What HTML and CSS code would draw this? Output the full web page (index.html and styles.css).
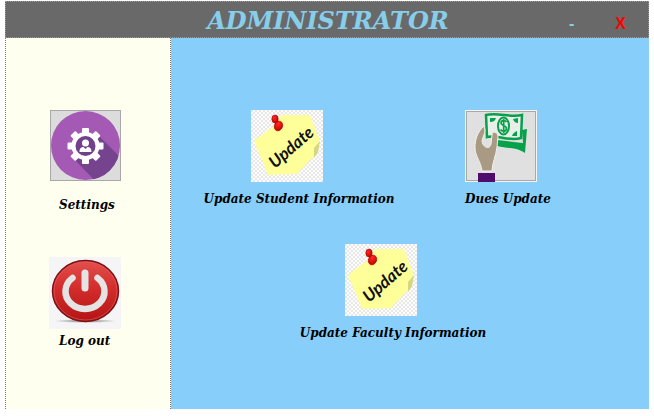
FILE: index.html
```html
<!DOCTYPE html>
<html lang="en">
<head>
<meta charset="utf-8">
<title>Administrator</title>
<link rel="stylesheet" href="styles.css">
</head>
<body>
<svg class="defs" aria-hidden="true">
  <defs>
    <pattern id="checks" width="4" height="4" patternUnits="userSpaceOnUse">
      <rect width="4" height="4" fill="#fcfcfc"/>
      <rect width="2" height="2" fill="#e8e8e8"/>
      <rect x="2" y="2" width="2" height="2" fill="#e8e8e8"/>
    </pattern>
    <radialGradient id="pin" cx="35%" cy="30%" r="75%">
      <stop offset="0" stop-color="#ff2a20"/>
      <stop offset="1" stop-color="#c40000"/>
    </radialGradient>
    <symbol id="note" viewBox="0 0 72 72">
      <rect width="72" height="72" fill="url(#checks)"/>
      <path d="M30 5 L59 5 L69 31 L63 46 L46 64 L17 65 L3 31 L24 15Z" fill="#ffff99"/>
      <path d="M69 31 L63 38 L63 48 L67 42Z" fill="#d6d680"/>
      <path d="M24 9 L27 15" stroke="#b00" stroke-width="4"/>
      <ellipse cx="24" cy="9" rx="3.200" ry="4" fill="url(#pin)" stroke="#a00" stroke-width=".6"/>
      <ellipse cx="27.500" cy="16" rx="4" ry="5" fill="url(#pin)" stroke="#a00" stroke-width=".6" transform="rotate(25 27.500 16)"/>
      <text class="note-text" x="24" y="59" transform="rotate(-41 24 59)">Update</text>
    </symbol>
  </defs>
</svg>
<div class="window">
  <header class="titlebar">
    <h1>ADMINISTRATOR</h1>
    <div class="controls">
      <button class="minimize" type="button" aria-label="Minimize">-</button>
      <button class="close" type="button" aria-label="Close">X</button>
    </div>
  </header>
  <div class="body">
    <nav class="sidebar">
      <button class="side-item settings" type="button">
        <svg class="icon" viewBox="0 0 72 72">
          <defs><clipPath id="disc"><circle cx="36.500" cy="36" r="34.500"/></clipPath></defs>
          <rect x="1.500" y=".5" width="70" height="70" fill="#dcdcdc" stroke="#a8a8a8"/>
          <circle cx="36.500" cy="35.500" r="34.500" fill="#a45ab4"/>
          <path d="M48 24 L75 51 L75 75 L50 75 L24 48Z" fill="#76438f" clip-path="url(#disc)"/>
          <g fill="#fff" transform="translate(36.500 36)">
            <circle r="14"/>
            <g id="cog">
              <rect x="-3.500" y="-18" width="7" height="36" rx="1"/>
              <rect x="-18" y="-3.500" width="36" height="7" rx="1"/>
            </g>
            <use href="#cog" transform="rotate(45)"/>
            <circle r="10" fill="#70408a"/>
            <circle cy="-3" r="3.500"/>
            <path d="M-6 6 C-6 1 -3 1 -2 1 L0 3 L2 1 C4 1 6 2 6 6Z"/>
          </g>
        </svg>
        <span>Settings</span>
      </button>
      <button class="side-item logout" type="button">
        <svg class="icon" viewBox="0 0 72 72">
          <defs>
            <linearGradient id="red" x2="0" y2="1">
              <stop offset="0" stop-color="#e2504d"/>
              <stop offset=".45" stop-color="#d32d2c"/>
              <stop offset="1" stop-color="#b41416"/>
            </linearGradient>
            <radialGradient id="shade"><stop offset="0" stop-color="#777"/><stop offset="1" stop-color="#f5f5f7"/></radialGradient>
          </defs>
          <rect width="72" height="72" fill="#f5f5f7"/>
          <ellipse cx="36" cy="64" rx="31" ry="2" fill="url(#shade)"/>
          <ellipse cx="36.500" cy="34" rx="33" ry="30.500" fill="url(#red)" stroke="#7d1012" stroke-width="1.500"/>
          <ellipse cx="36.500" cy="34" rx="31.500" ry="29" fill="none" stroke="#e2605c" stroke-width=".6"/>
          <path d="M23.500 21 A19.500 17.500 0 1 0 48.500 21" fill="none" stroke="#e4e4e4" stroke-width="6.500" stroke-linecap="round"/>
          <path d="M36 16 V31" stroke="#e4e4e4" stroke-width="7" stroke-linecap="round"/>
        </svg>
        <span>Log out</span>
      </button>
    </nav>
    <main class="tiles">
      <div class="row">
        <button class="tile" type="button">
          <svg class="icon"><use href="#note"/></svg>
          <span>Update Student Information</span>
        </button>
        <button class="tile dues" type="button">
          <svg class="icon" viewBox="0 0 72 72">
            <rect width="72" height="72" fill="#f4f4f4"/>
            <rect x="1.500" y="1.500" width="69" height="69" fill="#e0e0e0" stroke="#a8a8a8"/>
            <path d="M57 20 L62 19 L60 43 C49 36 42 39 32 36 L32 30 C42 31 50 32 58 33Z" fill="#07a04b"/>
            <path d="M21 5 C32 2 46 8 57 5 L56 28 C44 32 32 24 22 27Z" fill="#e9eee9" stroke="#07a04b" stroke-width="2.500"/>
            <path d="M25 8 L31 8 C30 11 28 12 25 12Z M53 8 L48 9 C49 12 51 13 53 13Z M52 26 L47 26 C48 23 50 22 52 21Z" fill="#07a04b"/>
            <ellipse cx="38.500" cy="16" rx="5.500" ry="8.500" fill="#e9eee9" stroke="#07a04b" stroke-width="2"/>
            <path d="M41.500 12 C40 10 36 10 36 13 C36 16 41.500 15 41.500 18.500 C41.500 22 37 21.500 35.500 19.500 M38.700 9 V23" fill="none" stroke="#07a04b" stroke-width="1.700"/>
            <path d="M19 16 C12 22 10 31 10 37 C10 47 16 51 17 61 L27 61 C27 53 31 46 32 37 L33 26 C32 21 27 21 27 25 L26 34 C25 40 18 38 17 31 C18 26 20 24 20 20Z" fill="#a99b83" stroke="#f2f0eb" stroke-width="1"/>
            <rect x="13" y="63" width="17" height="9" fill="#500c6d"/>
          </svg>
          <span>Dues Update</span>
        </button>
      </div>
      <div class="row second">
        <button class="tile" type="button">
          <svg class="icon"><use href="#note"/></svg>
          <span>Update Faculty Information</span>
        </button>
      </div>
    </main>
  </div>
</div>
</body>
</html>
```
FILE: styles.css
```css
* {
  box-sizing: border-box;
}

body {
  margin: 0;
  background: #fff;
  font-family: "DejaVu Serif", serif;
}

button {
  padding: 0;
  border: 0;
  background: none;
  font: inherit;
  color: inherit;
}

.defs {
  position: absolute;
  width: 0;
  height: 0;
}

.window {
  display: flex;
  flex-direction: column;
  min-height: 100vh;
  padding: 1px 5px 7px;
}

.titlebar {
  display: grid;
  grid-template-columns: 1fr auto 1fr;
  align-items: center;
  height: 37px;
  border: 1px dotted #999;
  background: #696969;
  color: #87ceeb;
}

.titlebar h1 {
  grid-column: 2;
  margin: 0;
  padding: 2px 0 0 2px;
  font-size: 24px;
  font-style: italic;
  line-height: 32px;
}

.controls {
  display: flex;
  justify-content: flex-end;
  gap: 41px;
  padding: 8px 22px 0 0;
  font-family: "Liberation Sans", sans-serif;
  font-size: 16px;
  font-weight: bold;
  line-height: 20px;
}

.close {
  color: #f00;
}

.body {
  display: grid;
  grid-template-columns: 166px 1fr;
  flex: 1;
}

.sidebar {
  display: flex;
  flex-direction: column;
  align-items: flex-start;
  padding: 72px 0 0 43px;
  border: 1px dotted #777;
  border-width: 0 1px;
  background: #fffff0;
}

.side-item,
.tile {
  display: flex;
  flex-direction: column;
  align-items: center;
  font-size: 12px;
  font-style: italic;
  font-weight: bold;
  line-height: 16px;
  color: #000;
  white-space: nowrap;
}

.side-item {
  align-items: flex-start;
}

.side-item span {
  padding-left: 10px;
}

.icon {
  display: block;
  width: 72px;
  height: 72px;
}

.settings {
  gap: 15px;
  margin-bottom: 44px;
}

.logout {
  gap: 4px;
}

.tiles {
  padding: 72px 30px 0;
  background: #87cefa;
}

.row {
  display: flex;
  gap: 68px;
}

.second {
  margin-top: 37px;
  padding-left: 94px;
}

.tile {
  gap: 9px;
  width: 196px;
}

.tile .icon {
  margin-right: 24px;
}

.dues {
  align-items: flex-start;
  width: auto;
}

.note-text {
  font-family: Lato, sans-serif;
  font-size: 17px;
  font-style: italic;
  font-weight: bold;
  fill: #111;
}
```
